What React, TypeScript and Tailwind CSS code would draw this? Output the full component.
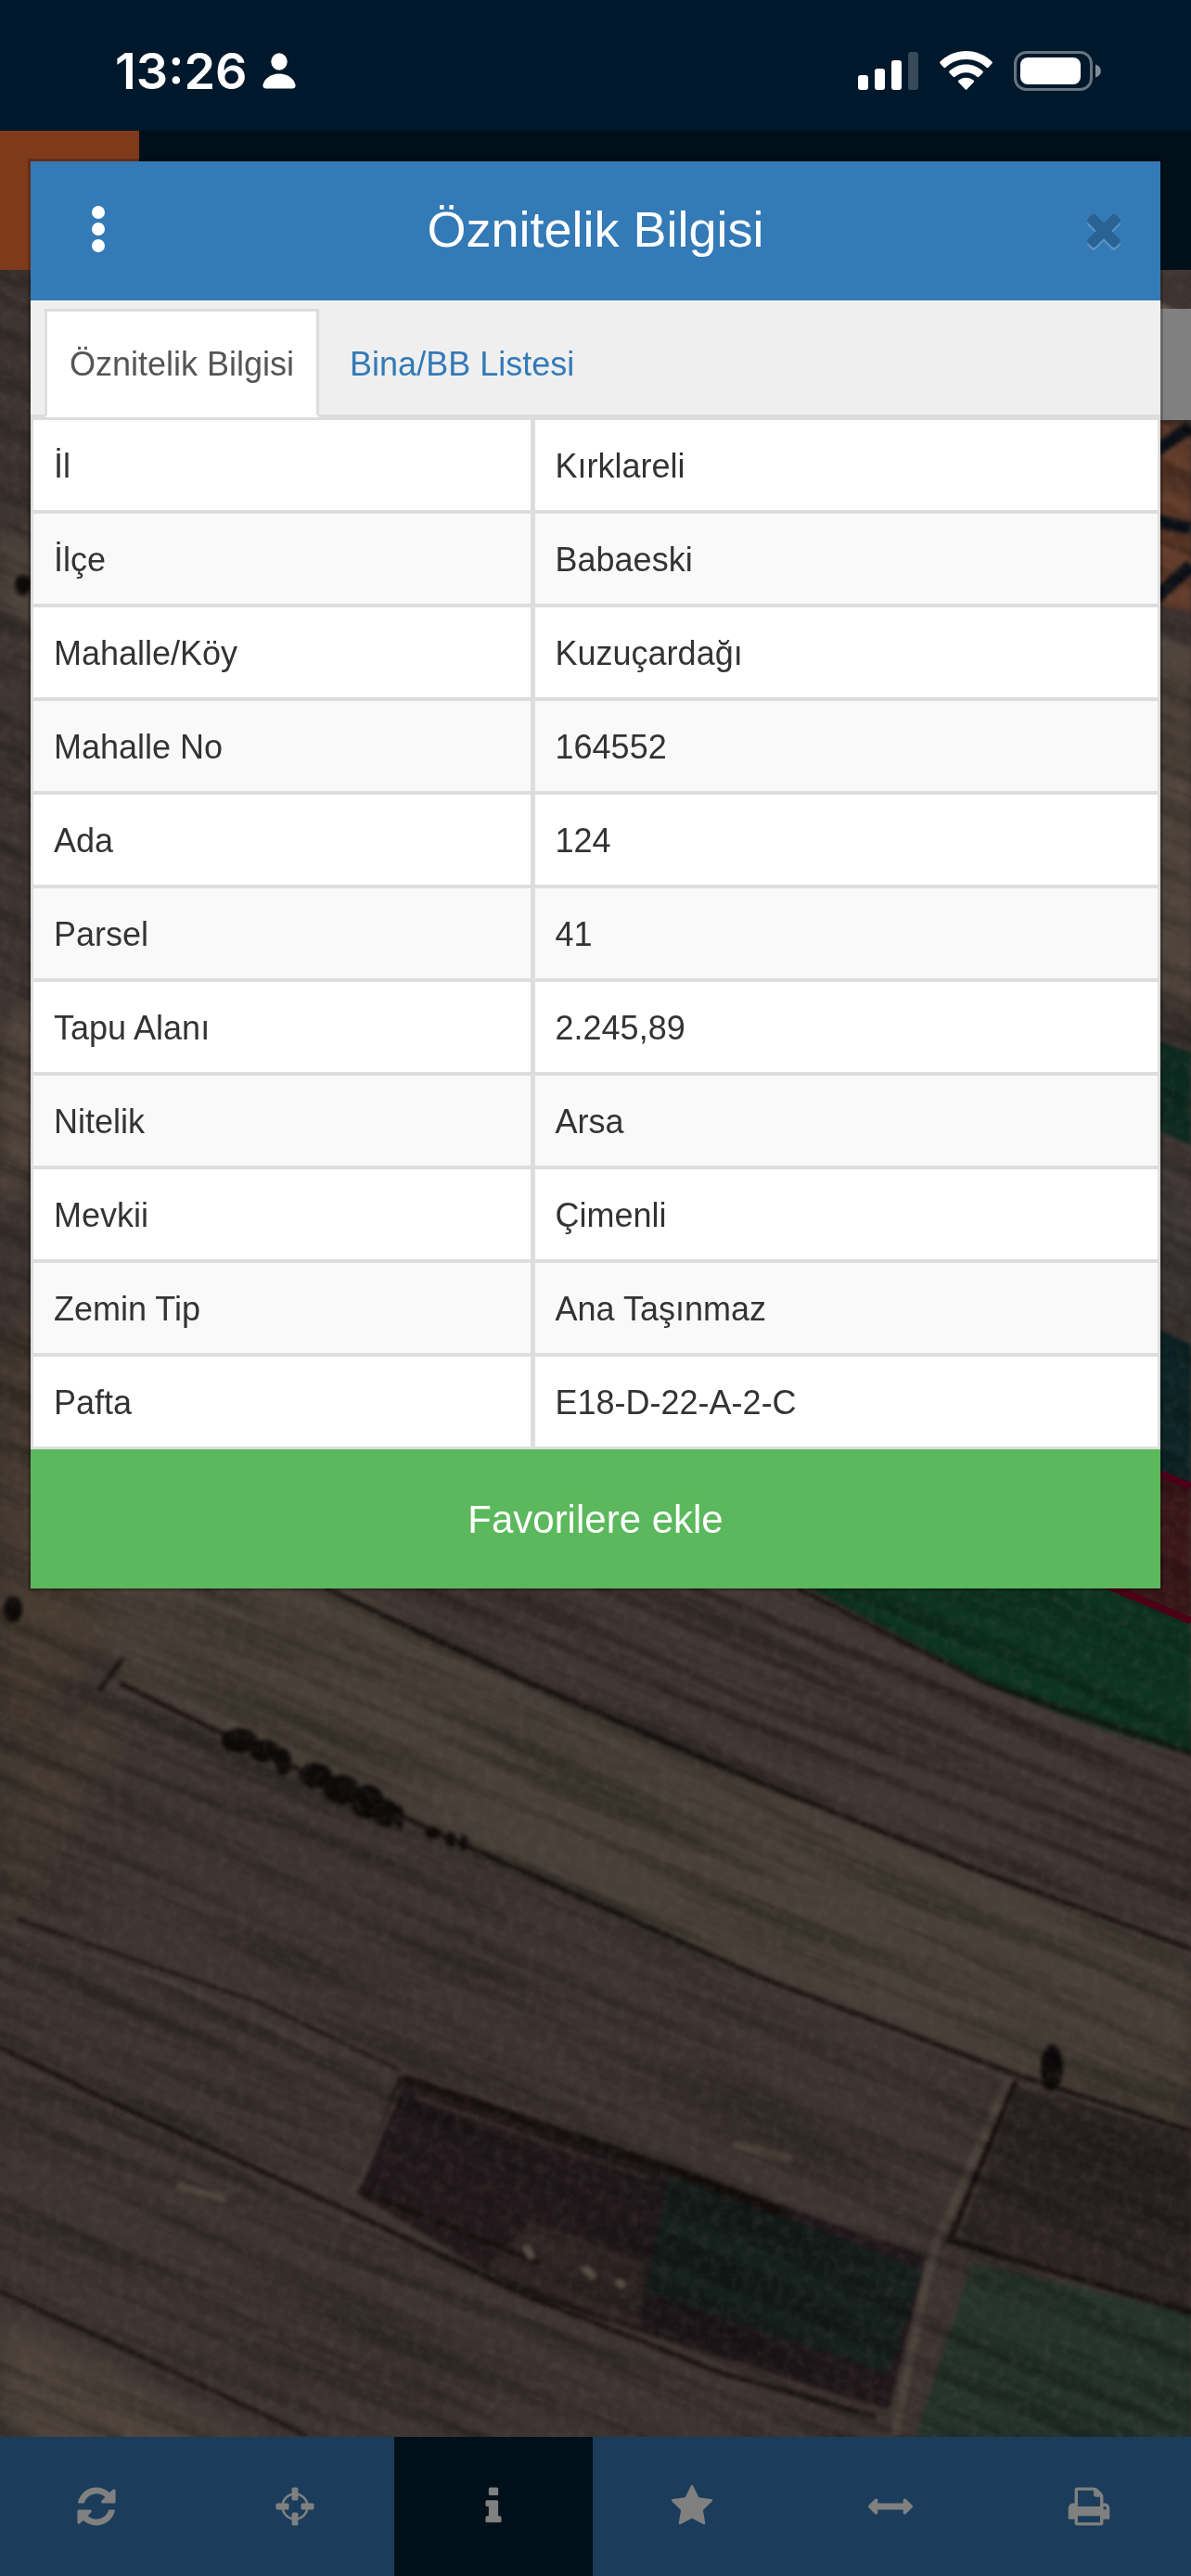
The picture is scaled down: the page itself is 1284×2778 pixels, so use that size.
import { FC, useState } from "react";

type Attribute = {
  label: string;
  value: string;
};

interface ToolProps {
  label: string;
  path: string;
}

const attributes: Attribute[] = [
  { label: "İl", value: "Kırklareli" },
  { label: "İlçe", value: "Babaeski" },
  { label: "Mahalle/Köy", value: "Kuzuçardağı" },
  { label: "Mahalle No", value: "164552" },
  { label: "Ada", value: "124" },
  { label: "Parsel", value: "41" },
  { label: "Tapu Alanı", value: "2.245,89" },
  { label: "Nitelik", value: "Arsa" },
  { label: "Mevkii", value: "Çimenli" },
  { label: "Zemin Tip", value: "Ana Taşınmaz" },
  { label: "Pafta", value: "E18-D-22-A-2-C" },
];

const tabs = ["Öznitelik Bilgisi", "Bina/BB Listesi"];

const closePath =
  "M1490 1322q0 40-28 68l-136 136q-28 28-68 28t-68-28l-294-294-294 294q-28 28-68 28t-68-28l-136-136q-28-28-28-68t28-68l294-294-294-294q-28-28-28-68t28-68l136-136q28-28 68-28t68 28l294 294 294-294q28-28 68-28t68 28l136 136q28 28 28 68t-28 68l-294 294 294 294q28 28 28 68z";

const tools: ToolProps[] = [
  {
    label: "Yenile",
    path: "M1639 1056q0 5-1 7-64 268-268 434.5t-478 166.5q-146 0-282.5-55t-243.5-157l-129 129q-19 19-45 19t-45-19-19-45v-448q0-26 19-45t45-19h448q26 0 45 19t19 45-19 45l-137 137q71 66 161 102t187 36q134 0 250-65t186-179q11-17 53-117 8-23 30-23h192q13 0 22.5 9.5t9.5 22.5zm25-800v448q0 26-19 45t-45 19h-448q-26 0-45-19t-19-45 19-45l138-138q-148-137-349-137-134 0-250 65t-186 179q-11 17-53 117-8 23-30 23h-199q-13 0-22.5-9.5t-9.5-22.5v-7q65-268 270-434.5t480-166.5q146 0 284 55.5t245 156.5l130-129q19-19 45-19t45 19 19 45z",
  },
  { label: "Konumum", path: "" },
  {
    label: "Bilgi",
    path: "M1216 1344v128q0 26-19 45t-45 19h-512q-26 0-45-19t-19-45v-128q0-26 19-45t45-19h64v-384h-64q-26 0-45-19t-19-45v-128q0-26 19-45t45-19h384q26 0 45 19t19 45v576h64q26 0 45 19t19 45zm-128-1152v192q0 26-19 45t-45 19h-256q-26 0-45-19t-19-45v-192q0-26 19-45t45-19h256q26 0 45 19t19 45z",
  },
  {
    label: "Favoriler",
    path: "M1728 647q0 22-26 48l-363 354 86 500q1 7 1 20 0 21-10.5 35.5t-30.5 14.5q-19 0-40-12l-449-236-449 236q-22 12-40 12-21 0-31.5-14.5t-10.5-35.5q0-6 2-20l86-500-364-354q-25-27-25-48 0-37 56-46l502-73 225-455q19-41 49-41t49 41l225 455 502 73q56 9 56 46z",
  },
  {
    label: "Ölç",
    path: "M1792 896q0 26-19 45l-256 256q-19 19-45 19t-45-19-19-45v-128h-1024v128q0 26-19 45t-45 19-45-19l-256-256q-19-19-19-45t19-45l256-256q19-19 45-19t45 19 19 45v128h1024v-128q0-26 19-45t45-19 45 19l256 256q19 19 19 45z",
  },
  {
    label: "Yazdır",
    path: "M448 1536h896v-256h-896v256zm0-640h896v-384h-160q-40 0-68-28t-28-68v-160h-640v640zm1152 64q0-26-19-45t-45-19-45 19-19 45 19 45 45 19 45-19 19-45zm128 0v416q0 13-9.5 22.5t-22.5 9.5h-224v160q0 40-28 68t-68 28h-960q-40 0-68-28t-28-68v-160h-224q-13 0-22.5-9.5t-9.5-22.5v-416q0-79 56.5-135.5t135.5-56.5h64v-544q0-40 28-68t68-28h672q40 0 88 20t76 48l152 152q28 28 48 76t20 88v256h64q79 0 135.5 56.5t56.5 135.5z",
  },
];

const CrosshairIcon = () => (
  <svg viewBox="0 0 48 48" className="size-12" fill="currentColor">
    <circle cx="24" cy="24" r="13.5" fill="none" stroke="currentColor" strokeWidth="2.6" />
    <rect x="20.6" y="3.5" width="6.8" height="14" rx="1.6" />
    <rect x="20.6" y="30.5" width="6.8" height="14" rx="1.6" />
    <rect x="3.5" y="20.6" width="14" height="6.8" rx="1.6" />
    <rect x="30.5" y="20.6" width="14" height="6.8" rx="1.6" />
  </svg>
);

const StatusBar = () => (
  <div className="flex h-[141px] items-center justify-between bg-[#00182b] pt-3 pr-24 pl-[124px] text-white">
    <div className="flex items-center gap-4">
      <span className="font-['Inter',sans-serif] text-[54px] leading-none font-semibold">
        13:26
      </span>
      <svg viewBox="0 0 36 39" className="h-[39px] w-9" fill="currentColor">
        <ellipse cx="18" cy="9.5" rx="8.7" ry="9.3" />
        <path d="M4 38.5C1.500 38.500 0 37 0.500 34.500C2 27.500 9 22.500 18 22.500S34 27.500 35.500 34.500C36 37 34.500 38.500 32 38.500Z" />
      </svg>
    </div>
    <div className="flex items-center gap-[23px]">
      <svg viewBox="0 0 65 43" className="h-[43px] w-[65px]" fill="currentColor">
        <rect x="0" y="26" width="11" height="16" rx="3" />
        <rect x="18" y="19" width="11" height="23" rx="3" />
        <rect x="36" y="10" width="11" height="32" rx="3" />
        <rect x="54" y="1" width="11" height="41" rx="3" opacity=".22" />
      </svg>
      <svg viewBox="0 0 57 43" className="h-[43px] w-[57px]" fill="currentColor">
        <path d="M28.500 0C17.500 0 7.500 4.500 .6 11.500Q-.3 12.500 .6 13.600L4.500 17.700Q5.500 18.600 6.500 17.700C12.300 12.100 20 9 28.500 9S44.700 12.100 50.500 17.700Q51.500 18.600 52.500 17.700L56.400 13.600Q57.300 12.500 56.400 11.500C49.500 4.500 39.500 0 28.500 0Z" />
        <path d="M28.500 14.500C21.500 14.500 15.200 17.200 10.600 21.600Q9.600 22.600 10.600 23.700L14.600 27.800Q15.600 28.700 16.600 27.800C19.800 24.900 24 23.200 28.500 23.200S37.200 24.900 40.400 27.800Q41.400 28.700 42.400 27.800L46.400 23.700Q47.400 22.600 46.400 21.600C41.800 17.200 35.500 14.500 28.500 14.500Z" />
        <path d="M28.500 28.800C25.400 28.800 22.700 29.900 20.500 31.600Q19.400 32.600 20.400 33.700L27.500 41.200Q28.500 42.200 29.500 41.200L36.600 33.700Q37.600 32.600 36.500 31.600C34.300 29.900 31.600 28.800 28.500 28.800Z" />
      </svg>
      <svg viewBox="0 0 95 43" className="h-[43px] w-[95px]" fill="currentColor">
        <rect x="1.500" y="1.500" width="82" height="40" rx="12" fill="none" stroke="currentColor" strokeWidth="3" opacity=".4" />
        <rect x="7" y="7" width="65" height="29" rx="8" />
        <path d="M88 14.500C91.500 15.500 93.800 18 93.800 21.500S91.500 27.500 88 28.500Z" opacity=".5" />
      </svg>
    </div>
  </div>
);

// Aerial imagery, already dimmed by the modal backdrop
const AerialMap = () => (
  <svg
    viewBox="0 291 1284 2337"
    preserveAspectRatio="xMidYMid slice"
    className="absolute inset-0 size-full"
    colorInterpolationFilters="sRGB"
    aria-hidden="true"
  >
    <defs>
      <filter id="streaks" x="0" y="0" width="100%" height="100%">
        <feTurbulence type="fractalNoise" baseFrequency="0.003 0.045" numOctaves="4" seed="8" />
        <feColorMatrix values="0 0 0 0 0  0 0 0 0 0  0 0 0 0 0  2.600 0 0 0 -1.050" />
      </filter>
      <filter id="grain" x="0" y="0" width="100%" height="100%">
        <feTurbulence type="fractalNoise" baseFrequency="0.09" numOctaves="4" seed="3" />
        <feColorMatrix values="0 0 0 0 .5  0 0 0 0 .45  0 0 0 0 .4  1.400 0 0 0 -.55" />
      </filter>
      <filter id="soft" x="-10%" y="-10%" width="120%" height="120%">
        <feGaussianBlur stdDeviation="2" />
      </filter>
      <filter id="blurry" x="-20%" y="-20%" width="140%" height="140%">
        <feGaussianBlur stdDeviation="12" />
      </filter>
    </defs>
    <rect y="291" width="1284" height="2337" fill="#3d3431" />
    <g filter="url(#blurry)">
      <path d="M0 1110L40 1080L40 1260L0 1300Z" fill="#54483d" />
      <path d="M0 560L40 610V700L0 640Z" fill="#50473d" />
      <path d="M0 1440L60 1400L160 1700L40 1860L0 1880Z" fill="#463b30" />
      <path d="M90 1700H380L573 1816L819 1922L1284 2102V2298L1097 2238L819 2132L508 1993L246 1873L131 1816Z" fill="#484038" />
      <path d="M0 1900L120 1830L140 1860L20 2080L0 2070Z" fill="#443a32" />
      <path d="M0 2500L300 2650H0Z" fill="#4d433b" />
    </g>
    <path d="M352 1700H860L1064 1816L1284 1891V2102L819 1922L573 1816Z" fill="#403633" filter="url(#soft)" />
    <g filter="url(#soft)" fill="none" strokeWidth="9" stroke="#2c2322" opacity=".7">
      <path d="M450 1710L700 1815L1284 2050" />
      <path d="M540 1710L820 1840L1284 2010" />
      <path d="M640 1710L900 1820L1284 1975" />
      <path d="M740 1710L1000 1815L1284 1935" />
    </g>
    <g filter="url(#soft)">
      <path d="M850 1700H1284V1891C1210 1875 1120 1840 1064 1816Z" fill="#0d3321" />
      <path d="M1240 320L1284 345V420H1240Z" fill="#62594e" />
      <path d="M1240 455H1284V660L1240 650Z" fill="#633c2b" />
      <path d="M1240 490L1284 460M1240 560L1284 570M1240 650L1284 610" stroke="#0b1018" strokeWidth="14" />
      <path d="M1240 680L1284 700V1100L1240 1070Z" fill="#4f443b" />
      <path d="M1240 1120L1284 1135V1235L1240 1215Z" fill="#0c2a20" />
      <path d="M1240 1240L1284 1260V1430L1240 1410Z" fill="#403838" />
      <path d="M1240 1430L1284 1450V1603L1240 1589Z" fill="#0b2325" />
      <path d="M1240 1589L1284 1605V1745L1200 1710Z" fill="#3b1719" />
      <path d="M430 2238L721 2336L999 2433L958 2599L573 2478L385 2366Z" fill="#21181b" />
      <path d="M721 2343L995 2448L958 2560L696 2471Z" fill="#151f1c" />
      <path d="M573 2395L696 2440L690 2510L520 2450Z" fill="#2e2524" />
      <path d="M1097 2250L1284 2303V2494L1032 2418Z" fill="#2c2424" />
      <path d="M1048 2441L1284 2494V2640H983Z" fill="#24332c" />
    </g>
    <g filter="url(#soft)" fill="none" stroke="#17100f" strokeLinecap="round">
      <path d="M352 1713L573 1816L819 1922L1050 2015L1284 2102" strokeWidth="5" />
      <path d="M131 1816L246 1873L508 1993L819 2132L1097 2238L1284 2298" strokeWidth="5" />
      <path d="M0 2208L123 2268L368 2381L573 2478L780 2560L942 2606" strokeWidth="5" />
      <path d="M860 1713L1064 1816L1284 1891" strokeWidth="4" />
      <path d="M0 2471L150 2540L328 2625" strokeWidth="4" />
      <path d="M1094 2246L1024 2416L1284 2494" strokeWidth="6" />
      <path d="M440 2243L721 2340L840 2385" strokeWidth="10" />
      <path d="M395 2365L580 2440" strokeWidth="6" />
      <path d="M20 2070L280 2160L430 2232" strokeWidth="3" />
      <path d="M131 1790L108 1822" strokeWidth="5" />
    </g>
    <g filter="url(#soft)" fill="none" stroke="#5a4e46" strokeLinecap="round">
      <path d="M1086 2246L1010 2418L996 2470L965 2625" strokeWidth="9" opacity=".6" />
      <path d="M0 2075L160 2130L290 2185L350 2215" strokeWidth="4" opacity=".6" />
      <path d="M430 2255L388 2355" strokeWidth="4" opacity=".6" />
      <path d="M450 2262L700 2350" strokeWidth="4" opacity=".4" />
      <path d="M795 2313L850 2328M195 2358L240 2370" strokeWidth="9" />
      <path d="M568 2425L572 2432M632 2448L638 2454M668 2462L670 2464" strokeWidth="9" />
    </g>
    <g filter="url(#soft)" fill="#0d0a0a">
      <ellipse cx="258" cy="1877" rx="20" ry="13" />
      <ellipse cx="285" cy="1888" rx="17" ry="12" />
      <ellipse cx="305" cy="1900" rx="9" ry="15" />
      <ellipse cx="340" cy="1915" rx="18" ry="14" />
      <ellipse cx="368" cy="1930" rx="20" ry="16" />
      <ellipse cx="396" cy="1943" rx="18" ry="18" />
      <ellipse cx="416" cy="1955" rx="13" ry="15" />
      <ellipse cx="430" cy="1960" rx="5" ry="13" />
      <ellipse cx="466" cy="1977" rx="8" ry="6" />
      <ellipse cx="486" cy="1984" rx="5" ry="8" />
      <ellipse cx="500" cy="1987" rx="4" ry="9" />
      <ellipse cx="1134" cy="2230" rx="12" ry="25" />
      <ellipse cx="14" cy="1735" rx="10" ry="14" />
      <ellipse cx="25" cy="631" rx="9" ry="11" />
    </g>
    <g transform="rotate(23 642 1460)">
      <rect x="-700" y="-100" width="2700" height="3100" filter="url(#streaks)" opacity=".28" />
    </g>
    <rect y="291" width="1284" height="2337" filter="url(#grain)" opacity=".2" />
    <path d="M1240 1585L1284 1603M1190 1708L1284 1748" stroke="#4b0018" strokeWidth="8" />
  </svg>
);

export default function App() {
  const [activeTab, setActiveTab] = useState(tabs[0]);

  return (
    <div className="relative flex min-h-screen flex-col overflow-hidden bg-[#00101b] font-['Liberation_Sans',Arial,sans-serif]">
      <StatusBar />
      <header className="h-[150px] bg-[#00101b]">
        <div className="h-full w-[150px] bg-[#7f3a1b]" />
      </header>
      <main className="relative flex-1 overflow-hidden">
        <AerialMap />
        <div className="absolute top-[42px] right-0 h-[120px] w-[120px] bg-[#808080]" />
      </main>
      <nav className="overflow-hidden bg-[#1b3d5b] text-[#808080]">
        <div className="-ml-[3px] mr-[3px] grid h-[150px] grid-cols-6">
          {tools.map((tool) => (
            <Tool key={tool.label} {...tool} />
          ))}
        </div>
      </nav>

      <section
        role="dialog"
        aria-labelledby="dialog-title"
        className="absolute inset-x-[33px] top-[174px] bg-white shadow-[0_0_0_3px_rgba(0,0,0,0.2)]"
      >
        <div className="flex h-[150px] items-center justify-between bg-[#337ab7] px-[34px] pb-1 text-white">
          <button aria-label="Menü" className="flex w-[78px] justify-center">
            <svg viewBox="0 0 14 50" className="h-[50px] w-3.5" fill="currentColor">
              <circle cx="7" cy="7" r="7" />
              <circle cx="7" cy="25" r="7" />
              <circle cx="7" cy="43" r="7" />
            </svg>
          </button>
          <h1 id="dialog-title" className="text-[54px] leading-none">
            Öznitelik Bilgisi
          </h1>
          <button aria-label="Kapat" className="flex w-[78px] justify-end">
            <svg
              viewBox="0 0 1792 1792"
              className="size-[54px] text-[#296293] drop-shadow-[0_3px_0_rgba(255,255,255,0.2)]"
              fill="currentColor"
            >
              <path d={closePath} />
            </svg>
          </button>
        </div>

        <div role="tablist" className="flex h-[126px] items-end gap-1.5 border-b-[3px] border-[#ddd] bg-[#efefef] px-[15px]">
          {tabs.map((tab) => (
            <button
              key={tab}
              role="tab"
              aria-selected={tab === activeTab}
              onClick={() => setActiveTab(tab)}
              className={
                tab === activeTab
                  ? "-mb-[3px] h-[117px] border-[3px] border-[#ddd] border-b-white bg-white px-6 pt-0.5 text-4xl text-[#555]"
                  : "-mb-[3px] h-[117px] border-[3px] border-transparent px-6 pt-0.5 text-4xl text-[#337ab7]"
              }
            >
              {tab}
            </button>
          ))}
        </div>

        <div className="border-[3px] border-[#ddd]">
          <table className="w-full table-fixed border-separate border-spacing-0 text-4xl text-[#333]">
            <tbody>
              {attributes.map((item) => (
                <tr key={item.label} className="group odd:bg-white even:bg-[#f9f9f9]">
                  <th
                    scope="row"
                    className="h-[101px] w-[44.6%] border-r-[5px] border-b-4 border-[#ddd] px-[22px] pt-0.5 text-left font-normal group-last:h-[97px] group-last:border-b-0"
                  >
                    {item.label}
                  </th>
                  <td className="border-b-4 border-[#ddd] px-[22px] pt-0.5 group-last:border-b-0">
                    {item.value}
                  </td>
                </tr>
              ))}
            </tbody>
          </table>
        </div>

        <button className="block h-[150px] w-full bg-[#5cb85c] text-[42px] text-white">
          Favorilere ekle
        </button>
      </section>
    </div>
  );
}

const Tool: FC<ToolProps> = ({ label, path }) => (
  <button
    aria-label={label}
    className={
      label === "Bilgi"
        ? "flex items-center justify-center bg-[#00101b]"
        : "flex items-center justify-center"
    }
  >
    {path ? (
      <svg viewBox="0 0 1792 1792" className="size-12" fill="currentColor">
        <path d={path} />
      </svg>
    ) : (
      <CrosshairIcon />
    )}
  </button>
);
